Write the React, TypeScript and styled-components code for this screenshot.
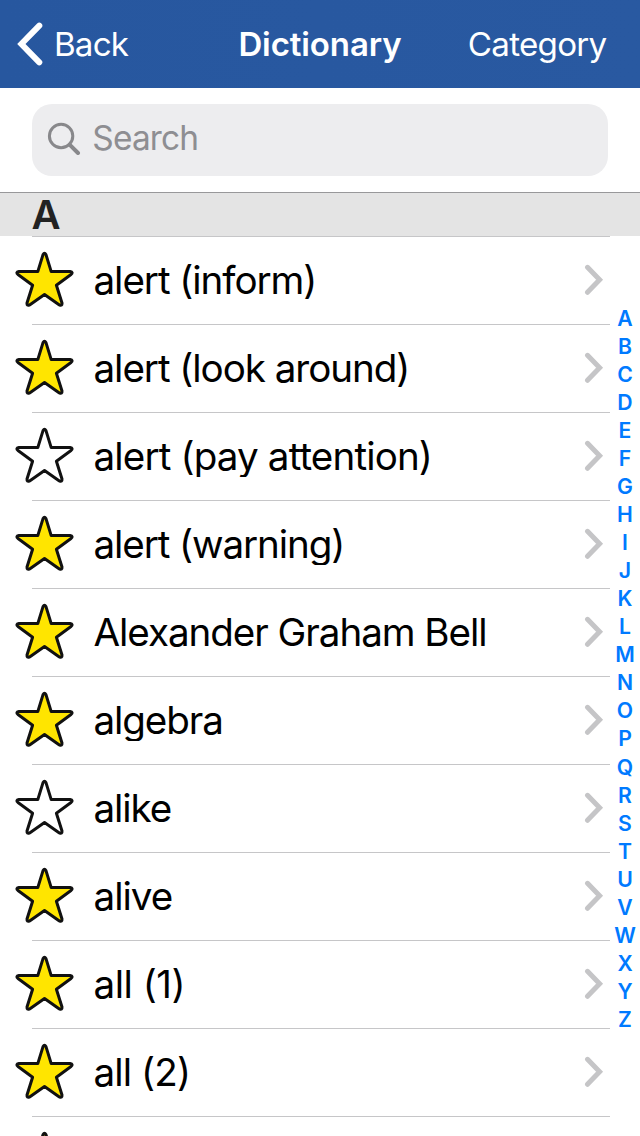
import React from "react";
import styled, { createGlobalStyle } from "styled-components";

const GlobalStyle = createGlobalStyle`
  * { box-sizing: border-box; }
  body { margin: 0; background: #fff; }
`;

const Screen = styled.div`
  width: 640px;
  height: 1136px;
  overflow: hidden;
  display: flex;
  flex-direction: column;
  background: #fff;
  color: #000;
  font-family: Inter, "Liberation Sans", sans-serif;
  font-kerning: normal;
`;

const NavBar = styled.header`
  flex: none;
  height: 88px;
  display: grid;
  grid-template-columns: 1fr auto 1fr;
  align-items: center;
  padding: 0 17px;
  background: linear-gradient(90deg, #27579f, #2959a1);
  color: #fff;
  font-size: 33.2px;
  line-height: 40px;
  white-space: nowrap;
`;

const BackButton = styled.div`
  display: flex;
  align-items: center;
  gap: 10px;
  letter-spacing: -0.85px;
`;

const Title = styled.h1`
  margin: 0;
  font-size: 33px;
  line-height: 40px;
  font-weight: 600;
  letter-spacing: -0.1px;
`;

const NavAction = styled.div`
  padding-right: 16.5px;
  text-align: right;
  letter-spacing: -0.75px;
`;

const SearchArea = styled.div`
  flex: none;
  height: 104px;
  padding: 16px 32px;
`;

const SearchField = styled.div`
  height: 72px;
  border-radius: 20px;
  background: #ededef;
  color: #8e8e92;
  display: flex;
  align-items: center;
  padding: 0 15px 4px;
  gap: 11.3px;
  font-size: 33.4px;
  line-height: 40px;
  letter-spacing: -0.8px;
`;

const SectionHeader = styled.h2`
  flex: none;
  margin: 0;
  height: 44px;
  border-top: 1px solid #98989a;
  background: #e4e4e4;
  padding-left: 31.5px;
  font-size: 40px;
  line-height: 43px;
  font-weight: 600;
  color: #222;
`;

const Body = styled.div`
  display: flex;
  flex: none;
`;

const List = styled.ul`
  margin: 0;
  padding: 0;
  list-style: none;
  width: 610px;
`;

const Row = styled.li`
  height: 88px;
  display: flex;
  align-items: center;
  padding: 0 6px 0 15px;
  background: linear-gradient(#c6c6c8, #c6c6c8) 32px 0 / 578px 1px no-repeat;
`;

const Label = styled.span<{ $spacing: number }>`
  flex: 1;
  height: 42px;
  margin-left: 18.5px;
  overflow: hidden;
  font-size: 38.6px;
  line-height: 42px;
  letter-spacing: ${(p) => p.$spacing}px;
  white-space: nowrap;
`;

const IndexBar = styled.nav`
  width: 30px;
  padding-top: 68px;
  display: flex;
  flex-direction: column;
  align-items: center;
  color: #007aff;
`;

const IndexLetter = styled.span`
  height: 28.04px;
  font-size: 21.2px;
  line-height: 28px;
  font-weight: 600;
`;

const BackChevron = () => (
  <svg width="27" height="44" viewBox="0 0 27 44" fill="none">
    <path d="M22.3 3.7 4.4 22 22.3 40.3" stroke="#fff" strokeWidth="6" strokeLinecap="round" />
  </svg>
);

const SearchIcon = () => (
  <svg width="34" height="34" viewBox="0 0 34 34" fill="none" stroke="#88888b">
    <circle cx="14.1" cy="15" r="11.7" strokeWidth="3" />
    <path d="M22.6 23.6 31 32" strokeWidth="4" strokeLinecap="round" />
  </svg>
);

const Star = ({ filled }: { filled: boolean }) => (
  <svg width="60" height="60" viewBox="0 0 60 60">
    <path
      d="M28.1 4.4Q29.5 1.9 30.9 4.4L36.2 21.6H55.2Q58.6 22 56 24.5L41.4 35.2L47 53Q47.3 56.3 44.4 54.9L29.5 44.5L14.6 54.9Q11.7 56.3 12 53L17.6 35.2L3 24.5Q.4 22 3.8 21.6H22.8Z"
      fill={filled ? "#ffe500" : "#fff"}
      stroke="#111"
      strokeWidth="3"
      strokeLinejoin="round"
    />
  </svg>
);

const Disclosure = () => (
  <svg width="20" height="32" viewBox="0 0 20 32" fill="none">
    <path d="M3.5 3.3 15.6 15.8 3.5 28.3" stroke="#c5c5c7" strokeWidth="5" strokeLinecap="round" />
  </svg>
);

const entries = [
  { word: "alert (inform)", starred: true, spacing: -1.05 },
  { word: "alert (look around)", starred: true, spacing: -1.05 },
  { word: "alert (pay attention)", starred: false, spacing: -0.86 },
  { word: "alert (warning)", starred: true, spacing: -1.1 },
  { word: "Alexander Graham Bell", starred: true, spacing: -1.05 },
  { word: "algebra", starred: true, spacing: -1.1 },
  { word: "alike", starred: false, spacing: -1.1 },
  { word: "alive", starred: true, spacing: -1 },
  { word: "all (1)", starred: true, spacing: -0.5 },
  { word: "all (2)", starred: true, spacing: -0.9 },
  { word: "", starred: true, spacing: -1 },
];

export default function App() {
  return (
    <Screen>
      <GlobalStyle />
      <NavBar>
        <BackButton>
          <BackChevron />
          Back
        </BackButton>
        <Title>Dictionary</Title>
        <NavAction>Category</NavAction>
      </NavBar>
      <SearchArea>
        <SearchField>
          <SearchIcon />
          Search
        </SearchField>
      </SearchArea>
      <SectionHeader>A</SectionHeader>
      <Body>
        <List>
          {entries.map((entry, i) => (
            <Row key={i}>
              <Star filled={entry.starred} />
              <Label $spacing={entry.spacing}>{entry.word}</Label>
              <Disclosure />
            </Row>
          ))}
        </List>
        <IndexBar>
          {"ABCDEFGHIJKLMNOPQRSTUVWXYZ".split("").map((letter) => (
            <IndexLetter key={letter}>{letter}</IndexLetter>
          ))}
        </IndexBar>
      </Body>
    </Screen>
  );
}
